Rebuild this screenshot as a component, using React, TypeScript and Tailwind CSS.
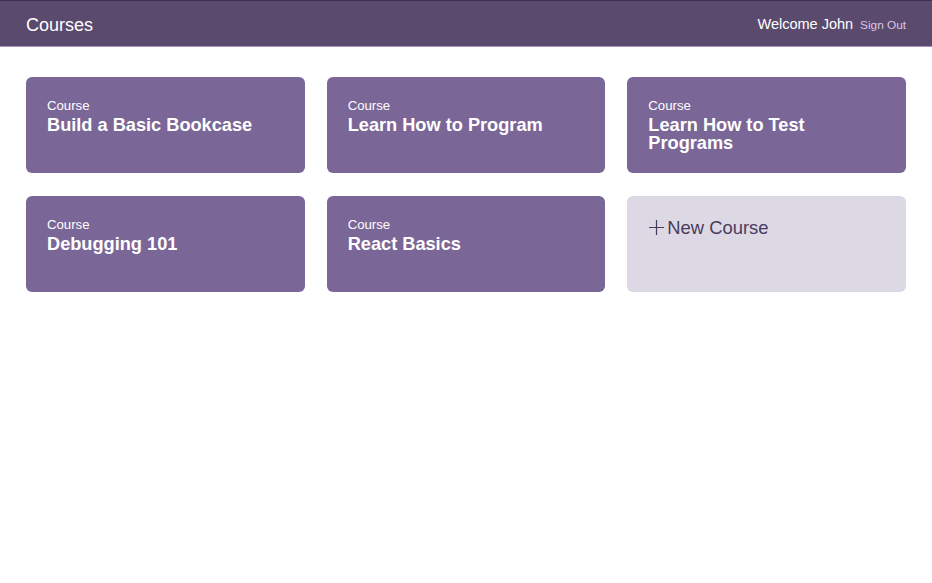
const courses = [
  "Build a Basic Bookcase",
  "Learn How to Program",
  "Learn How to Test Programs",
  "Debugging 101",
  "React Basics",
];

export default function App() {
  return (
    <div className="min-h-screen bg-white font-['Liberation_Sans',Arial,sans-serif]">
      <header className="flex h-[47px] items-center justify-between border-t border-b border-t-[#3e3150] border-b-[#a795bc] bg-[#5a4a6d] px-[26px] pt-[3px] text-white">
        <span className="text-[18px]">Courses</span>
        <div className="flex items-baseline gap-[7px]">
          <span className="text-[14.5px]">Welcome John</span>
          <a href="#" className="text-[11.8px] text-[#dcc6e6]">
            Sign Out
          </a>
        </div>
      </header>

      <main className="grid grid-cols-3 gap-x-[22px] gap-y-[23px] px-[26px] pt-[30px]">
        {courses.map((title) => (
          <a
            key={title}
            href="#"
            className="block h-[96px] rounded-[6px] bg-[#7b6797] px-[21px] pt-[21px] text-white"
          >
            <div className="text-[13.2px] leading-[15px]">Course</div>
            <div className="mt-[3px] text-[18.2px] font-bold leading-[18px]">{title}</div>
          </a>
        ))}
        <a
          href="#"
          className="flex h-[96px] items-start rounded-[6px] bg-[#dcd9e4] px-[22px] pt-[18px] text-[#4a3b5e]"
        >
          <span className="flex items-center gap-[3px] text-[18.4px]">
            <svg width="15" height="15" viewBox="0 0 15 15" stroke="currentColor" strokeWidth="1.2">
              <path d="M7.5 0v15M0 7.5h15" />
            </svg>
            New Course
          </span>
        </a>
      </main>
    </div>
  );
}
